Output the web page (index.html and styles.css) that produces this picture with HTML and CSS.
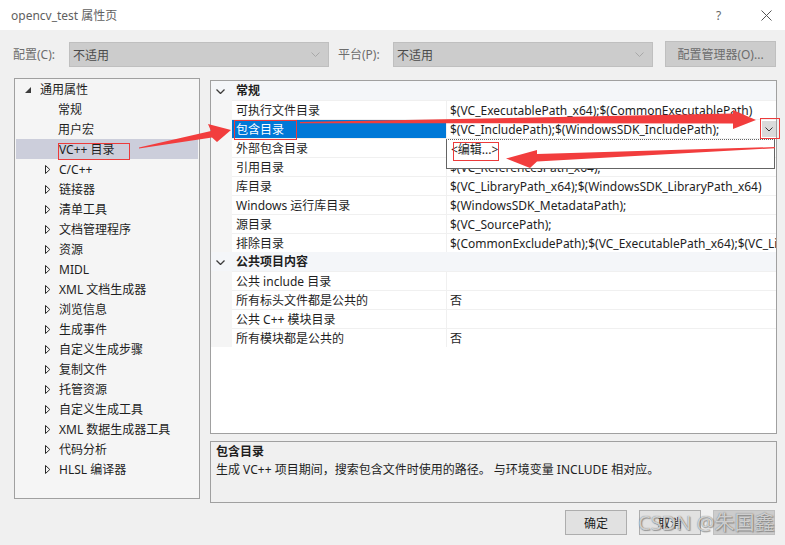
FILE: index.html
```html
<!DOCTYPE html>
<html lang="zh-CN">
<head>
<meta charset="utf-8">
<title>opencv_test 属性页</title>
<link rel="stylesheet" href="styles.css">
</head>
<body>
<div class="dialog">
  <header class="titlebar">
    <span class="title">opencv_test 属性页</span>
    <span class="help">?</span>
    <svg class="close" width="11" height="11" viewBox="0 0 11 11"><path d="M0.5 0.5 L10.5 10.5 M10.5 0.5 L0.5 10.5" stroke="#555" stroke-width="1" fill="none"/></svg>
  </header>

  <div class="toolbar">
    <span class="lbl">配置(C):</span>
    <div class="combo"><span class="combo-text">不适用</span><svg class="combo-chev" width="9" height="5" viewBox="0 0 9 5"><path d="M0.5 0.5 L4.5 4.5 L8.5 0.5" stroke="#a8a8a8" fill="none"/></svg></div>
    <span class="lbl lbl-platform">平台(P):</span>
    <div class="combo"><span class="combo-text">不适用</span><svg class="combo-chev" width="9" height="5" viewBox="0 0 9 5"><path d="M0.5 0.5 L4.5 4.5 L8.5 0.5" stroke="#a8a8a8" fill="none"/></svg></div>
    <button class="btn btn-off cfg-mgr">配置管理器(O)...</button>
  </div>

  <div class="content">
    <nav class="tree">
      <div class="node root"><svg class="tw" width="6" height="6" viewBox="0 0 6 6"><path d="M6 0 L6 6 L0 6 Z" fill="#3c3c3c"/></svg>通用属性</div>
      <div class="node leaf">常规</div>
      <div class="node leaf">用户宏</div>
      <div class="node leaf selected">VC++ 目录</div>
      <div class="node branch"><svg class="tw" width="6" height="9" viewBox="0 0 6 9"><path d="M0.5 0.5 L4.8 4.5 L0.5 8.5 Z" stroke="#2a2a2a" fill="none"/></svg>C/C++</div>
      <div class="node branch"><svg class="tw" width="6" height="9" viewBox="0 0 6 9"><path d="M0.5 0.5 L4.8 4.5 L0.5 8.5 Z" stroke="#2a2a2a" fill="none"/></svg>链接器</div>
      <div class="node branch"><svg class="tw" width="6" height="9" viewBox="0 0 6 9"><path d="M0.5 0.5 L4.8 4.5 L0.5 8.5 Z" stroke="#2a2a2a" fill="none"/></svg>清单工具</div>
      <div class="node branch"><svg class="tw" width="6" height="9" viewBox="0 0 6 9"><path d="M0.5 0.5 L4.8 4.5 L0.5 8.5 Z" stroke="#2a2a2a" fill="none"/></svg>文档管理程序</div>
      <div class="node branch"><svg class="tw" width="6" height="9" viewBox="0 0 6 9"><path d="M0.5 0.5 L4.8 4.5 L0.5 8.5 Z" stroke="#2a2a2a" fill="none"/></svg>资源</div>
      <div class="node branch"><svg class="tw" width="6" height="9" viewBox="0 0 6 9"><path d="M0.5 0.5 L4.8 4.5 L0.5 8.5 Z" stroke="#2a2a2a" fill="none"/></svg>MIDL</div>
      <div class="node branch"><svg class="tw" width="6" height="9" viewBox="0 0 6 9"><path d="M0.5 0.5 L4.8 4.5 L0.5 8.5 Z" stroke="#2a2a2a" fill="none"/></svg>XML 文档生成器</div>
      <div class="node branch"><svg class="tw" width="6" height="9" viewBox="0 0 6 9"><path d="M0.5 0.5 L4.8 4.5 L0.5 8.5 Z" stroke="#2a2a2a" fill="none"/></svg>浏览信息</div>
      <div class="node branch"><svg class="tw" width="6" height="9" viewBox="0 0 6 9"><path d="M0.5 0.5 L4.8 4.5 L0.5 8.5 Z" stroke="#2a2a2a" fill="none"/></svg>生成事件</div>
      <div class="node branch"><svg class="tw" width="6" height="9" viewBox="0 0 6 9"><path d="M0.5 0.5 L4.8 4.5 L0.5 8.5 Z" stroke="#2a2a2a" fill="none"/></svg>自定义生成步骤</div>
      <div class="node branch"><svg class="tw" width="6" height="9" viewBox="0 0 6 9"><path d="M0.5 0.5 L4.8 4.5 L0.5 8.5 Z" stroke="#2a2a2a" fill="none"/></svg>复制文件</div>
      <div class="node branch"><svg class="tw" width="6" height="9" viewBox="0 0 6 9"><path d="M0.5 0.5 L4.8 4.5 L0.5 8.5 Z" stroke="#2a2a2a" fill="none"/></svg>托管资源</div>
      <div class="node branch"><svg class="tw" width="6" height="9" viewBox="0 0 6 9"><path d="M0.5 0.5 L4.8 4.5 L0.5 8.5 Z" stroke="#2a2a2a" fill="none"/></svg>自定义生成工具</div>
      <div class="node branch"><svg class="tw" width="6" height="9" viewBox="0 0 6 9"><path d="M0.5 0.5 L4.8 4.5 L0.5 8.5 Z" stroke="#2a2a2a" fill="none"/></svg>XML 数据生成器工具</div>
      <div class="node branch"><svg class="tw" width="6" height="9" viewBox="0 0 6 9"><path d="M0.5 0.5 L4.8 4.5 L0.5 8.5 Z" stroke="#2a2a2a" fill="none"/></svg>代码分析</div>
      <div class="node branch"><svg class="tw" width="6" height="9" viewBox="0 0 6 9"><path d="M0.5 0.5 L4.8 4.5 L0.5 8.5 Z" stroke="#2a2a2a" fill="none"/></svg>HLSL 编译器</div>
    </nav>

    <div class="right">
      <div class="grid">
        <div class="row cat"><span class="gutter"><svg width="9" height="5" viewBox="0 0 9 5"><path d="M0.5 0.5 L4.5 4.5 L8.5 0.5" stroke="#3c3c3c" stroke-width="1.3" fill="none"/></svg></span><span class="cat-name">常规</span></div>
        <div class="row"><span class="gutter"></span><span class="name">可执行文件目录</span><span class="value">$(VC_ExecutablePath_x64);$(CommonExecutablePath)</span></div>
        <div class="row active"><span class="gutter"></span><span class="name">包含目录</span><span class="value"><span class="value-text">$(VC_IncludePath);$(WindowsSDK_IncludePath);</span><span class="drop-btn"><svg width="8" height="5" viewBox="0 0 8 5"><path d="M0.5 0.5 L4 4 L7.5 0.5" stroke="#333" fill="none"/></svg></span></span></div>
        <div class="row"><span class="gutter"></span><span class="name">外部包含目录</span><span class="value">$(VC_IncludePath);$(WindowsSDK_IncludePath);</span></div>
        <div class="row"><span class="gutter"></span><span class="name">引用目录</span><span class="value">$(VC_ReferencesPath_x64);</span></div>
        <div class="row"><span class="gutter"></span><span class="name">库目录</span><span class="value">$(VC_LibraryPath_x64);$(WindowsSDK_LibraryPath_x64)</span></div>
        <div class="row"><span class="gutter"></span><span class="name">Windows 运行库目录</span><span class="value">$(WindowsSDK_MetadataPath);</span></div>
        <div class="row"><span class="gutter"></span><span class="name">源目录</span><span class="value">$(VC_SourcePath);</span></div>
        <div class="row"><span class="gutter"></span><span class="name">排除目录</span><span class="value">$(CommonExcludePath);$(VC_ExecutablePath_x64);$(VC_LibraryPath_x64)</span></div>
        <div class="row cat"><span class="gutter"><svg width="9" height="5" viewBox="0 0 9 5"><path d="M0.5 0.5 L4.5 4.5 L8.5 0.5" stroke="#3c3c3c" stroke-width="1.3" fill="none"/></svg></span><span class="cat-name">公共项目内容</span></div>
        <div class="row"><span class="gutter"></span><span class="name">公共 include 目录</span><span class="value"></span></div>
        <div class="row"><span class="gutter"></span><span class="name">所有标头文件都是公共的</span><span class="value">否</span></div>
        <div class="row"><span class="gutter"></span><span class="name">公共 C++ 模块目录</span><span class="value"></span></div>
        <div class="row"><span class="gutter"></span><span class="name">所有模块都是公共的</span><span class="value">否</span></div>
        <div class="popup">&lt;编辑...&gt;</div>
      </div>
      <div class="desc">
        <div class="desc-title">包含目录</div>
        <div class="desc-text">生成 VC++ 项目期间，搜索包含文件时使用的路径。 与环境变量 INCLUDE 相对应。</div>
      </div>
    </div>
  </div>

  <footer class="footer">
    <button class="btn">确定</button>
    <button class="btn">取消</button>
    <button class="btn btn-off"></button>
  </footer>

  <div class="watermark">CSDN @朱国鑫</div>

  <svg class="marks" width="785" height="545" viewBox="0 0 785 545">
    <g fill="none" stroke="#ec3b3b" stroke-width="1">
      <rect x="58.5" y="143.5" width="71" height="16"/>
      <rect x="234.5" y="120.5" width="62" height="19"/>
      <rect x="453.5" y="142.5" width="45" height="18"/>
      <rect x="760.5" y="118.5" width="19" height="20"/>
    </g>
    <g fill="#f23d3d">
      <polygon points="139,147.4 211,131 208,124 231,130 217,142 212,137.5 139,148.6"/>
      <polygon points="300,122 733,113.5 733,110 756,120 733,129 733,123.5 300,123.2"/>
      <polygon points="775,147 537,154 537,150 506,158.5 530,168 537,161.5 775,148.2"/>
    </g>
  </svg>
</div>
</body>
</html>
```

FILE: styles.css
```css
* {
  box-sizing: border-box;
}

html,
body {
  margin: 0;
  padding: 0;
}

body {
  width: 785px;
  height: 545px;
  overflow: hidden;
  background: #f0f0f0;
  font-family: "Noto Sans", "Noto Sans CJK SC", sans-serif;
  font-size: 12px;
  color: #1e1e1e;
}

.dialog {
  position: relative;
  width: 785px;
  height: 545px;
}

/* title bar */
.titlebar {
  height: 30px;
  background: #fff;
  display: flex;
  align-items: center;
  padding-left: 11px;
  padding-right: 13px;
  color: #5f5f5f;
}

.title {
  flex: 1;
}

.help {
  width: 8px;
  margin-right: 37px;
  color: #666;
  font-size: 12px;
}

.close {
  display: block;
}

/* configuration / platform row */
.toolbar {
  height: 48px;
  display: flex;
  align-items: flex-start;
  padding: 11px 0 0 13px;
}

.lbl {
  width: 56px;
  height: 25px;
  margin-top: 1px;
  line-height: 25px;
  color: #6d6d6d;
}

.lbl-platform {
  width: 55px;
  margin-left: 9px;
}

.combo {
  width: 260px;
  height: 25px;
  margin-top: 1px;
  background: #cccccc;
  border: 1px solid #bfbfbf;
  display: flex;
  align-items: center;
  padding: 0 4px 0 3px;
}

.combo-text {
  flex: 1;
  color: #4a4a4a;
}

.combo-chev {
  display: block;
  margin-right: 4px;
}

.btn {
  font: inherit;
  color: #1e1e1e;
  background: #e1e1e1;
  border: 1px solid #adadad;
  padding: 0;
  width: 62px;
  height: 25px;
}

.btn-off {
  background: #cccccc;
  border-color: #bfbfbf;
  color: #6d6d6d;
}

.cfg-mgr {
  width: 111px;
  height: 26px;
  margin-left: 12px;
}

/* main area */
.content {
  display: flex;
  align-items: flex-start;
  height: 424px;
}

.tree {
  margin-left: 14px;
  width: 186px;
  height: 421px;
  border: 1px solid #a0a0a0;
  background: #f5f5f5;
}

.node {
  height: 20px;
  display: flex;
  align-items: center;
  white-space: nowrap;
}

.node .tw {
  display: block;
  flex: none;
}

.root {
  padding-left: 10px;
}

.root .tw {
  margin-right: 9px;
  margin-top: 2px;
}

.leaf {
  padding-left: 43px;
}

.branch {
  padding-left: 30px;
}

.branch .tw {
  margin-right: 8px;
}

.selected {
  background: #cccedb;
  margin: 0 1px;
}

.right {
  margin-left: 10px;
  width: 567px;
}

/* property grid */
.grid {
  position: relative;
  margin-top: 2px;
  height: 354px;
  border: 1px solid #a0a0a0;
  background: #fff;
}

.row {
  display: flex;
  height: 19px;
  line-height: 18px;
  white-space: nowrap;
}

.gutter {
  width: 21px;
  flex: none;
  background: #f5f5f5;
  display: flex;
  align-items: center;
  padding-left: 5px;
}

.gutter svg {
  display: block;
}

.name {
  width: 215px;
  flex: none;
  padding: 1px 0 0 4px;
  border-top: 1px solid #f0f0f0;
  border-right: 1px solid #f0f0f0;
  overflow: hidden;
}

.value {
  flex: 1;
  min-width: 0;
  overflow: hidden;
  padding: 1px 0 0 3px;
  border-top: 1px solid #f0f0f0;
}

.cat {
  background: #f4f6f9;
}

.cat .gutter {
  background: transparent;
  padding-top: 1px;
}

.cat-name {
  padding: 1px 0 0 4px;
  font-weight: bold;
}

.active .name {
  background: #0078d7;
  color: #fff;
}

.active .value {
  display: flex;
  padding-top: 0;
}

.value-text {
  flex: 1;
  padding-top: 1px;
}

.drop-btn {
  width: 14px;
  height: 16px;
  margin-top: 1px;
  background: #dadada;
  display: flex;
  align-items: center;
  justify-content: center;
}

.drop-btn svg {
  display: block;
}

.popup {
  position: absolute;
  left: 235px;
  top: 58px;
  width: 329px;
  height: 30px;
  background: #fff;
  border: 1px solid #646464;
  border-top-style: dotted;
  padding: 1px 0 0 4px;
  line-height: 18px;
}

/* description */
.desc {
  margin-top: 7px;
  height: 62px;
  border: 1px solid #a0a0a0;
  padding: 1px 5px;
  line-height: 18px;
}

.desc-title {
  font-weight: bold;
}

/* buttons */
.footer {
  display: flex;
  justify-content: flex-end;
  gap: 12px;
  padding: 8px 10px 0 0;
}

.watermark {
  position: absolute;
  left: 638px;
  top: 510px;
  font-size: 20px;
  line-height: 26px;
  color: rgba(240, 240, 240, 0.75);
  text-shadow: 0 0 1px rgba(60, 60, 60, 0.7), 1px 1px 1px rgba(90, 90, 90, 0.5);
  white-space: nowrap;
}

.marks {
  position: absolute;
  left: 0;
  top: 0;
  pointer-events: none;
}
```
